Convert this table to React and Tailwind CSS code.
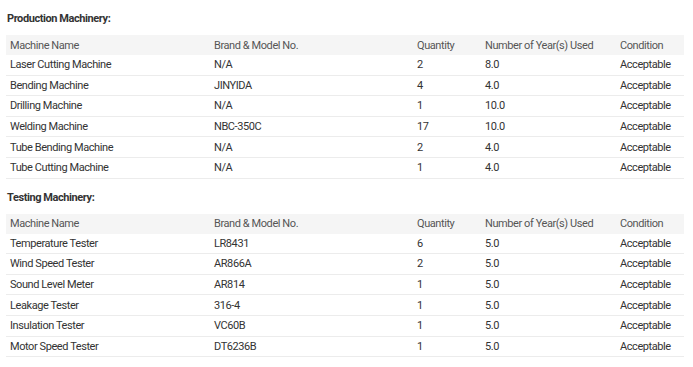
const production = [
  ["Laser Cutting Machine", "N/A", "2", "8.0", "Acceptable"],
  ["Bending Machine", "JINYIDA", "4", "4.0", "Acceptable"],
  ["Drilling Machine", "N/A", "1", "10.0", "Acceptable"],
  ["Welding Machine", "NBC-350C", "17", "10.0", "Acceptable"],
  ["Tube Bending Machine", "N/A", "2", "4.0", "Acceptable"],
  ["Tube Cutting Machine", "N/A", "1", "4.0", "Acceptable"],
];

const testing = [
  ["Temperature Tester", "LR8431", "6", "5.0", "Acceptable"],
  ["Wind Speed Tester", "AR866A", "2", "5.0", "Acceptable"],
  ["Sound Level Meter", "AR814", "1", "5.0", "Acceptable"],
  ["Leakage Tester", "316-4", "1", "5.0", "Acceptable"],
  ["Insulation Tester", "VC60B", "1", "5.0", "Acceptable"],
  ["Motor Speed Tester", "DT6236B", "1", "5.0", "Acceptable"],
];

const headers = ["Machine Name", "Brand & Model No.", "Quantity", "Number of Year(s) Used", "Condition"];

// column template shared by header and rows
const cols = "grid grid-cols-[204px_203px_68px_135px_68px]";

function MachineTable({ title, rows, first }) {
  return (
    <section>
      <h3 className={`${first ? "pt-[11px]" : "pt-[11px]"} pb-[8px] pl-[1px] text-[11px] font-bold leading-4 text-[#333]`}>
        {title}
      </h3>
      <div className="w-[678px]">
        <div className={`${cols} h-[20px] items-center bg-[#f5f5f5] text-[#555]`}>
          {headers.map((h) => (
            <div key={h} className="pl-[4px] pt-[1px]">{h}</div>
          ))}
        </div>
        {rows.map((r) => (
          <div key={r[0]} className={`${cols} h-[20.6px] items-center border-b border-[#ececec] text-[#333]`}>
            {r.map((c, i) => (
              <div key={i} className="pl-[4px] pt-[1px]">{c}</div>
            ))}
          </div>
        ))}
      </div>
    </section>
  );
}

export default function App() {
  return (
    <div className="h-[367px] w-[693px] bg-white px-[6px] text-[11px] leading-4 tracking-[-0.42px]" style={{ fontFamily: "Roboto, 'Liberation Sans', sans-serif" }}>
      <MachineTable title="Production Machinery:" rows={production} first />
      <MachineTable title="Testing Machinery:" rows={testing} />
    </div>
  );
}
